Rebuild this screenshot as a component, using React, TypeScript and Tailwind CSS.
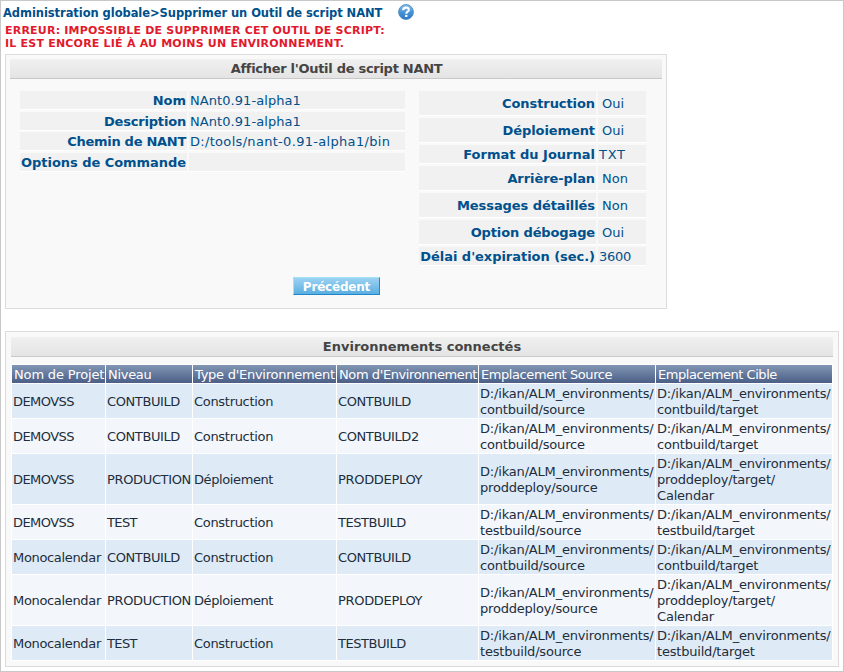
type Field = { label: string; value: string; tall?: boolean; gap: string };

const leftFields: Field[] = [
  { label: 'Nom', value: 'NAnt0.91-alpha1', gap: 'mb-[2px]' },
  { label: 'Description', value: 'NAnt0.91-alpha1', gap: 'mb-[1px]' },
  { label: 'Chemin de NANT', value: 'D:/tools/nant-0.91-alpha1/bin', gap: 'mb-[2px]' },
  { label: 'Options de Commande', value: '', gap: '' },
];

const rightFields: Field[] = [
  { label: 'Construction', value: 'Oui', tall: true, gap: 'mb-[2px]' },
  { label: 'Déploiement', value: 'Oui', tall: true, gap: 'mb-[2px]' },
  { label: 'Format du Journal', value: 'TXT', gap: 'mb-[2px]' },
  { label: 'Arrière-plan', value: 'Non', tall: true, gap: 'mb-[2px]' },
  { label: 'Messages détaillés', value: 'Non', tall: true, gap: 'mb-[2px]' },
  { label: 'Option débogage', value: 'Oui', tall: true, gap: 'mb-[2px]' },
  { label: "Délai d'expiration (sec.)", value: '3600', gap: '' },
];

// Letter spacing of the form's labels and values.
const fieldTracking: Record<string, string> = {
  Description: 'tracking-[-0.18px]',
  'Chemin de NANT': 'tracking-[-0.28px]',
  'Options de Commande': 'tracking-[-0.05px]',
  Construction: 'tracking-[-0.08px]',
  'Déploiement': 'tracking-[-0.09px]',
  'Arrière-plan': 'tracking-[-0.08px]',
  'Messages détaillés': 'tracking-[-0.08px]',
  'Option débogage': 'tracking-[-0.13px]',
  "Délai d'expiration (sec.)": 'tracking-[-0.04px]',
  'NAnt0.91-alpha1': 'tracking-[0.07px]',
  'D:/tools/nant-0.91-alpha1/bin': 'tracking-[0.31px]',
  TXT: 'tracking-[0.7px]',
  '3600': 'tracking-[-0.25px]',
};

const headers: [string, string][] = [
  ['Nom de Projet', 'tracking-[-0.15px]'],
  ['Niveau', 'tracking-[-0.3px]'],
  ["Type d'Environnement", 'tracking-[-0.26px]'],
  ["Nom d'Environnement", 'tracking-[-0.4px]'],
  ['Emplacement Source', 'tracking-[-0.42px]'],
  ['Emplacement Cible', 'tracking-[-0.45px]'],
];

const ROOT = 'D:/ikan/ALM_environments/';

// Letter spacing of the table's cells.
const cellTracking: Record<string, string> = {
  [ROOT]: 'tracking-[-0.18px]',
  DEMOVSS: 'tracking-[-0.57px]',
  CONTBUILD: 'tracking-[-0.4px]',
  CONTBUILD2: 'tracking-[-0.4px]',
  Construction: 'tracking-[-0.3px]',
  PRODUCTION: 'tracking-[-0.35px]',
  'Déploiement': 'tracking-[-0.4px]',
  PRODDEPLOY: 'tracking-[-0.32px]',
  TEST: 'tracking-[-0.6px]',
  TESTBUILD: 'tracking-[-0.45px]',
  Monocalendar: 'tracking-[-0.33px]',
};

const rows: { cells: string[]; source: string[]; target: string[] }[] = [
  { cells: ['DEMOVSS', 'CONTBUILD', 'Construction', 'CONTBUILD'], source: [ROOT, 'contbuild/source'], target: [ROOT, 'contbuild/target'] },
  { cells: ['DEMOVSS', 'CONTBUILD', 'Construction', 'CONTBUILD2'], source: [ROOT, 'contbuild/source'], target: [ROOT, 'contbuild/target'] },
  { cells: ['DEMOVSS', 'PRODUCTION', 'Déploiement', 'PRODDEPLOY'], source: [ROOT, 'proddeploy/source'], target: [ROOT, 'proddeploy/target/', 'Calendar'] },
  { cells: ['DEMOVSS', 'TEST', 'Construction', 'TESTBUILD'], source: [ROOT, 'testbuild/source'], target: [ROOT, 'testbuild/target'] },
  { cells: ['Monocalendar', 'CONTBUILD', 'Construction', 'CONTBUILD'], source: [ROOT, 'contbuild/source'], target: [ROOT, 'contbuild/target'] },
  { cells: ['Monocalendar', 'PRODUCTION', 'Déploiement', 'PRODDEPLOY'], source: [ROOT, 'proddeploy/source'], target: [ROOT, 'proddeploy/target/', 'Calendar'] },
  { cells: ['Monocalendar', 'TEST', 'Construction', 'TESTBUILD'], source: [ROOT, 'testbuild/source'], target: [ROOT, 'testbuild/target'] },
];

function FieldRow({ field, columns, shift }: { field: Field; columns: string; shift?: boolean }) {
  const height = field.tall ? 'h-[25px]' : 'h-[19px]';
  const cell = 'flex items-center border-b border-white bg-[#f1f1f1] pt-[2px]';
  return (
    <div className={`grid gap-x-[2px] ${columns} ${height} ${field.gap}`}>
      <div className={`${cell} justify-end pr-px font-bold ${fieldTracking[field.label] ?? ''}`}>{field.label}</div>
      <div className={`${cell} ${shift && field.tall ? 'pl-1' : 'pl-px'} ${fieldTracking[field.value] ?? ''}`}>{field.value}</div>
    </div>
  );
}

function PanelTitle({ children, tracking }: { children: string; tracking: string }) {
  return (
    <h2 className={`flex h-5 items-center justify-center border-b border-[#c8c8c8] bg-linear-to-b from-[#f0f0f0] to-[#e4e4e4] font-bold text-[#444] ${tracking}`}>
      {children}
    </h2>
  );
}

function HelpIcon() {
  return (
    <svg width="16" height="16" viewBox="0 0 16 16" className="ml-[16px]">
      <defs>
        <linearGradient id="help" x1="0" y1="0" x2="0" y2="1">
          <stop offset="0" stopColor="#8cc4ee" />
          <stop offset="0.5" stopColor="#4795d8" />
          <stop offset="1" stopColor="#2d78c4" />
        </linearGradient>
      </defs>
      <circle cx="8" cy="8" r="7.4" fill="url(#help)" stroke="#4a86bd" strokeWidth="0.9" />
      <path d="M5.2 6.3C5.2 4.5 6.4 3.6 8 3.6s2.8.8 2.8 2.3c0 1.8-2.5 1.8-2.5 3.8" fill="none" stroke="#fff" strokeWidth="2.1" />
      <rect x="7.1" y="10.9" width="2.3" height="2.1" fill="#fff" />
    </svg>
  );
}

export default function App() {
  return (
    <div className="flex h-[672px] w-[844px] flex-col overflow-hidden border border-[#c8c8c8] bg-white pl-1 font-['DejaVu_Sans',Verdana,sans-serif] text-[13px] leading-4 whitespace-nowrap text-[#00508c]">
      <header className="h-[53px] pt-[3px]">
        <div className="-ml-[2px] flex h-4 items-center text-[11.5px] font-bold">
          <h1 className="w-[379px] pt-[2px] tracking-[-0.06px]">Administration globale&gt;Supprimer un Outil de script NANT</h1>
          <HelpIcon />
        </div>
        <p className="mt-1 text-[11px] leading-[13px] font-bold tracking-[0.21px] text-[#e2192c]">
          ERREUR: IMPOSSIBLE DE SUPPRIMER CET OUTIL DE SCRIPT:
          <br />
          IL EST ENCORE LIÉ À AU MOINS UN ENVIRONNEMENT.
        </p>
      </header>

      <section className="h-[255px] w-[662px] shrink-0 border border-[#dcdcdc] bg-[#f9f9f9] px-1 pt-1">
        <PanelTitle tracking="tracking-[-0.29px] pl-px">Afficher l'Outil de script NANT</PanelTitle>
        <div className="mt-3 flex pl-[10px]">
          <div className="w-[385px]">
            {leftFields.map((f) => (
              <FieldRow key={f.label} field={f} columns="grid-cols-[167px_216px]" />
            ))}
          </div>
          <div className="ml-[14px] w-[227px]">
            {rightFields.map((f) => (
              <FieldRow key={f.label} field={f} columns="grid-cols-[177px_48px]" shift />
            ))}
          </div>
        </div>
        <button className="mt-[11px] ml-[283px] flex h-[18px] w-[87px] items-center justify-center border border-t-[#a5e1f5] border-r-[#2187c8] border-b-[#2187c8] border-l-[#a5e1f5] bg-linear-to-b from-[#9bd2f3] to-[#5aaee0] pt-[2px] text-[12px] font-bold tracking-[-0.2px] text-white">
          Précédent
        </button>
      </section>

      <section className="mt-[22px] h-[336px] w-[834px] shrink-0 border border-[#dcdcdc] bg-[#f9f9f9] pt-[5px] pr-[5px] pl-[5px]">
        <PanelTitle tracking="tracking-normal">Environnements connectés</PanelTitle>
        <div className="mt-[7px] grid grid-cols-[93px_86px_143px_141px_176px_176px] gap-px bg-white p-px text-[#222d3c]">
          {headers.map(([text, tracking]) => (
            <div key={text} className={`flex h-[18px] items-center bg-linear-to-b from-[#8296b4] to-[#4b5f87] pt-[2px] pl-[2px] text-white ${tracking}`}>
              {text}
            </div>
          ))}
          {rows.map((row, i) => {
            const tone = i % 2 === 0 ? 'bg-[#deebf6]' : 'bg-[#f3f6fb]';
            return [...row.cells.map((c) => [c]), row.source, row.target].map((lines, j) => (
              <div key={`${i}-${j}`} className={`flex flex-col justify-center pt-[2px] pl-px ${tone}`}>
                {lines.map((line) => (
                  <span key={line} className={cellTracking[line] ?? 'tracking-[-0.2px]'}>
                    {line}
                  </span>
                ))}
              </div>
            ));
          })}
        </div>
      </section>
    </div>
  );
}
